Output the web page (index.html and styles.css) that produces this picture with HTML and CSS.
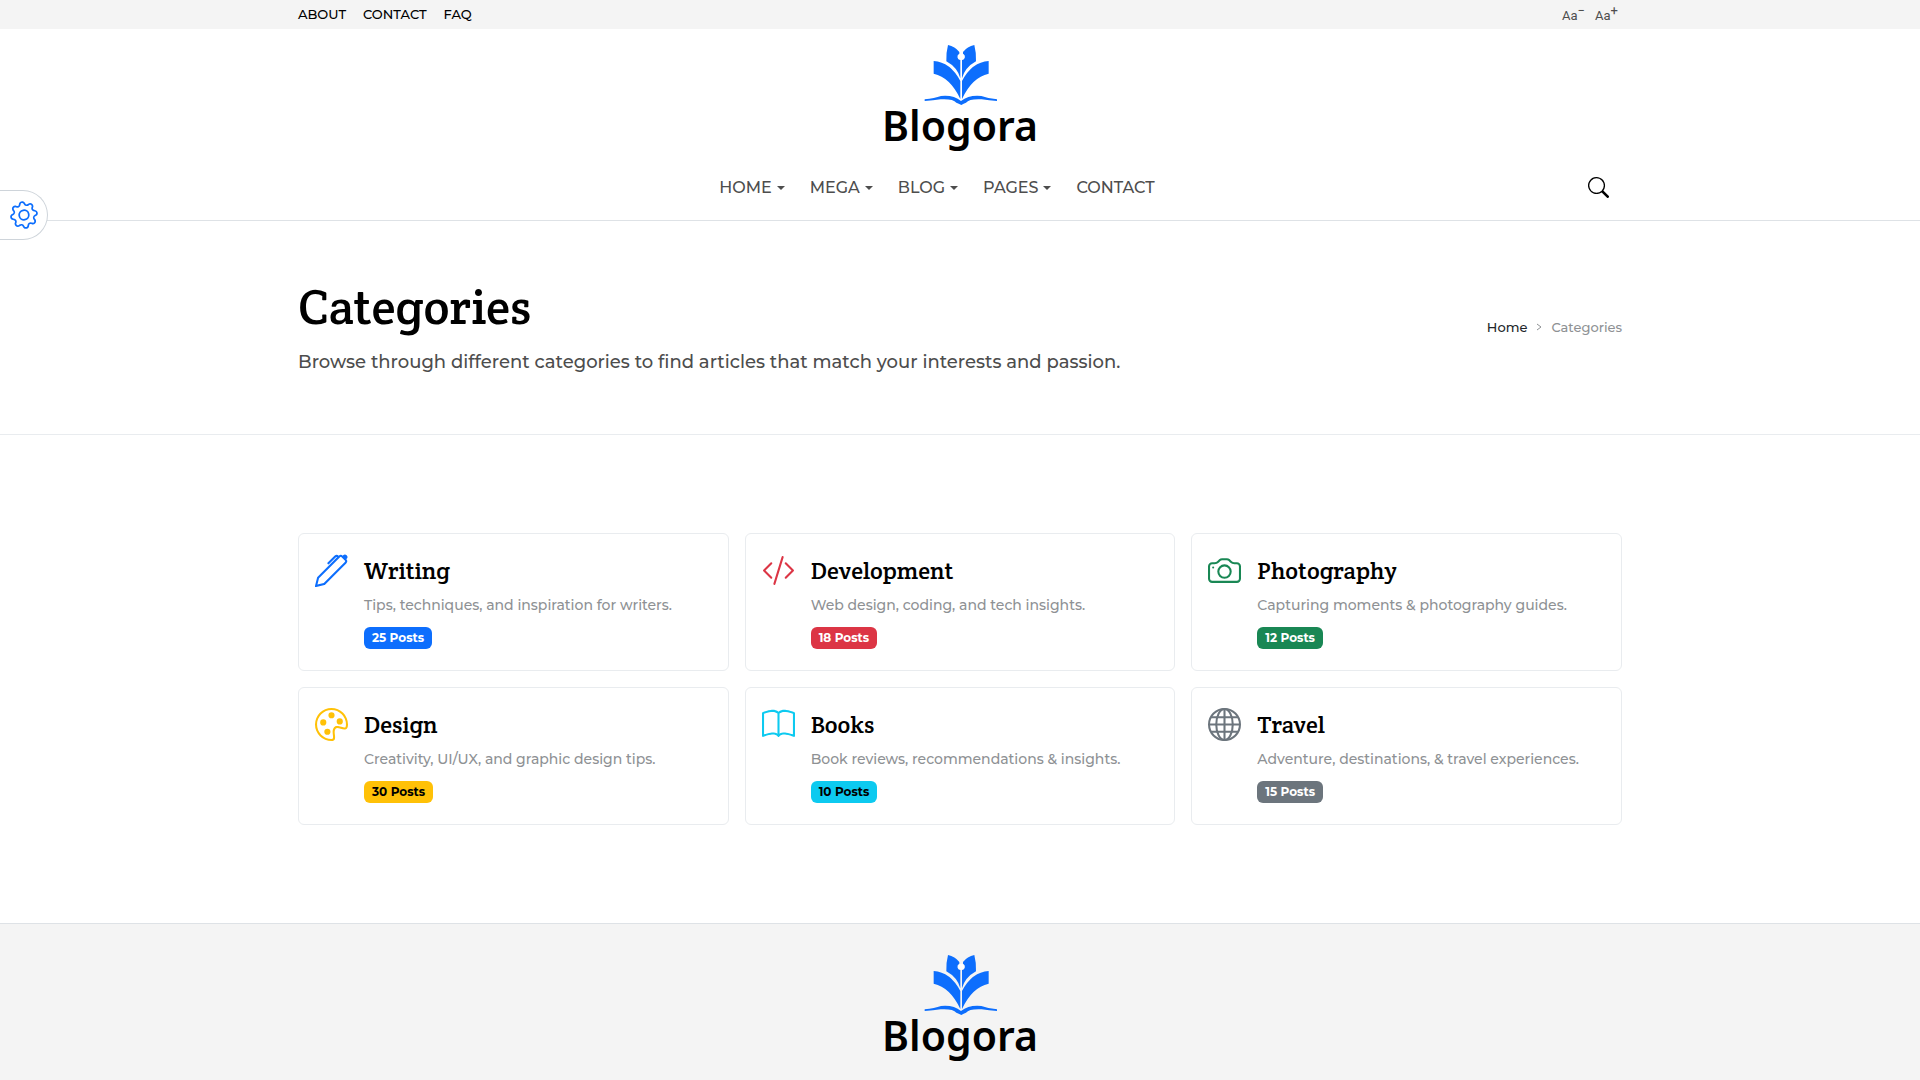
FILE: index.html
```html
<!DOCTYPE html>
<html lang="en">
<head>
    <meta charset="UTF-8">
    <meta name="viewport" content="width=device-width, initial-scale=1.0">
    <title>Blogora - Categories</title>
    <link rel="stylesheet" href="styles.css">
</head>
<body>
    <!-- Shared logo mark -->
    <svg class="sprite" aria-hidden="true">
        <symbol id="logo-mark" viewBox="193 45 219 180">
            <path d="M265 45Q286 49 299 66L299 71A10 10 0 0 0 302 90L302 145Q293 112 260 94Q259 68 265 45Z"/>
            <path d="M344 45Q323 49 310 66L310 71A10 10 0 0 1 307 90L307 145Q316 112 349 94Q350 68 344 45Z"/>
            <circle cx="304.500" cy="80" r="9" class="logo-dot"/>
            <path d="M222 93Q272 96 302 153L302 207Q272 142 222 131Z"/>
            <path d="M387 93Q337 96 307 153L307 207Q337 142 387 131Z"/>
            <path d="M195 208Q225 205 244 198Q281 194 304 213Q328 194 365 198Q384 205 412 208L412 213Q388 212 366 208Q329 206 319 218Q312 220 305 225Q297 220 290 218Q280 206 243 208Q221 212 195 213Z"/>
        </symbol>
    </svg>

    <!-- Top Bar -->
    <div class="top-bar">
        <div class="container top-bar-inner">
            <nav class="top-links" aria-label="Secondary">
                <a href="#">ABOUT</a>
                <a href="#">CONTACT</a>
                <a href="#">FAQ</a>
            </nav>
            <div class="font-size-btns">
                <button type="button" aria-label="Decrease text size">Aa<sup>−</sup></button>
                <button type="button" aria-label="Increase text size">Aa<sup>+</sup></button>
            </div>
        </div>
    </div>

    <!-- Header -->
    <header class="site-header">
        <div class="container">
            <a href="#" class="logo">
                <svg class="logo-mark" aria-hidden="true"><use href="#logo-mark"/></svg>
                <span class="logo-text">Blogora</span>
            </a>
            <div class="nav-row">
                <nav class="main-nav" aria-label="Main">
                    <a href="#" class="dropdown">HOME</a>
                    <a href="#" class="dropdown">MEGA</a>
                    <a href="#" class="dropdown">BLOG</a>
                    <a href="#" class="dropdown">PAGES</a>
                    <a href="#">CONTACT</a>
                </nav>
                <button type="button" class="search-btn" aria-label="Search">
                    <svg viewBox="0 0 16 16"><path d="M11.742 10.344a6.5 6.5 0 1 0-1.397 1.398h-.001q.044.06.098.115l3.85 3.85a1 1 0 0 0 1.415-1.414l-3.85-3.85a1 1 0 0 0-.115-.1zM12 6.500a5.500 5.500 0 1 1-11 0 5.500 5.500 0 0 1 11 0"/></svg>
                </button>
            </div>
        </div>
    </header>

    <button type="button" class="settings-btn" aria-label="Theme settings">
        <svg viewBox="0 0 16 16">
            <g transform="rotate(-10 8 8)">
                <path d="M8 4.754a3.246 3.246 0 1 0 0 6.492 3.246 3.246 0 0 0 0-6.492M5.754 8a2.246 2.246 0 1 1 4.492 0 2.246 2.246 0 0 1-4.492 0"/>
                <path d="M9.796 1.343c-.527-1.79-3.065-1.79-3.592 0l-.094.319a.873.873 0 0 1-1.255.52l-.292-.16c-1.64-.892-3.433.902-2.54 2.541l.159.292a.873.873 0 0 1-.52 1.255l-.319.094c-1.79.527-1.79 3.065 0 3.592l.319.094a.873.873 0 0 1 .52 1.255l-.16.292c-.892 1.64.901 3.434 2.541 2.54l.292-.159a.873.873 0 0 1 1.255.52l.094.319c.527 1.79 3.065 1.79 3.592 0l.094-.319a.873.873 0 0 1 1.255-.52l.292.16c1.64.893 3.434-.902 2.54-2.541l-.159-.292a.873.873 0 0 1 .52-1.255l.319-.094c1.79-.527 1.79-3.065 0-3.592l-.319-.094a.873.873 0 0 1-.52-1.255l.16-.292c.893-1.64-.902-3.433-2.541-2.54l-.292.159a.873.873 0 0 1-1.255-.52zm-2.633.283c.246-.835 1.428-.835 1.674 0l.094.319a1.873 1.873 0 0 0 2.693 1.115l.291-.16c.764-.415 1.6.42 1.184 1.185l-.159.292a1.873 1.873 0 0 0 1.116 2.692l.318.094c.835.246.835 1.428 0 1.674l-.319.094a1.873 1.873 0 0 0-1.115 2.693l.16.291c.415.764-.42 1.6-1.185 1.184l-.291-.159a1.873 1.873 0 0 0-2.693 1.116l-.094.318c-.246.835-1.428.835-1.674 0l-.094-.319a1.873 1.873 0 0 0-2.692-1.115l-.292.16c-.764.415-1.6-.42-1.184-1.185l.159-.291A1.873 1.873 0 0 0 1.945 8.930l-.319-.094c-.835-.246-.835-1.428 0-1.674l.319-.094A1.873 1.873 0 0 0 3.060 4.377l-.16-.292c-.415-.764.42-1.6 1.185-1.184l.292.159a1.873 1.873 0 0 0 2.692-1.115z"/>
            </g>
        </svg>
    </button>

    <main>
        <!-- Page Title -->
        <section class="page-title">
            <div class="container page-title-inner">
                <div>
                    <h1>Categories</h1>
                    <p>Browse through different categories to find articles that match your interests and passion.</p>
                </div>
                <nav class="breadcrumb" aria-label="Breadcrumb">
                    <a href="#">Home</a>
                    <svg viewBox="0 0 8 8" aria-hidden="true"><path d="M2 1L6 4L2 7"/></svg>
                    <span>Categories</span>
                </nav>
            </div>
        </section>

        <!-- Category Cards -->
        <section class="container category-grid">
            <a href="#" class="card blue">
                <svg viewBox="0 0 16 16"><path d="m13.498.795.149-.149a1.207 1.207 0 1 1 1.707 1.708l-.149.148a1.500 1.500 0 0 1-.059 2.059L4.854 14.854a.5.5 0 0 1-.233.131l-4 1a.5.5 0 0 1-.606-.606l1-4a.5.5 0 0 1 .131-.232l9.642-9.642a.5.5 0 0 0-.642.056L6.854 4.854a.5.5 0 1 1-.708-.708L9.440.854A1.500 1.500 0 0 1 11.500.796a1.500 1.500 0 0 1 1.998-.001m-.644.766a.5.5 0 0 0-.707 0L1.950 11.756l-.764 3.057 3.057-.764L14.440 3.854a.5.5 0 0 0 0-.708z"/></svg>
                <div>
                    <h2>Writing</h2>
                    <p>Tips, techniques, and inspiration for writers.</p>
                    <span class="badge">25 Posts</span>
                </div>
            </a>
            <a href="#" class="card red">
                <svg viewBox="0 0 16 16"><path d="M10.478 1.647a.5.5 0 1 0-.956-.294l-4 13a.5.5 0 0 0 .956.294zM4.854 4.146a.5.5 0 0 1 0 .708L1.707 8l3.147 3.146a.5.5 0 0 1-.708.708l-3.500-3.500a.5.5 0 0 1 0-.708l3.500-3.500a.5.5 0 0 1 .708 0m6.292 0a.5.5 0 0 0 0 .708L14.293 8l-3.147 3.146a.5.5 0 0 0 .708.708l3.500-3.500a.5.5 0 0 0 0-.708l-3.500-3.500a.5.5 0 0 0-.708 0"/></svg>
                <div>
                    <h2>Development</h2>
                    <p>Web design, coding, and tech insights.</p>
                    <span class="badge">18 Posts</span>
                </div>
            </a>
            <a href="#" class="card green">
                <svg viewBox="0 0 16 16">
                    <path d="M15 12a1 1 0 0 1-1 1H2a1 1 0 0 1-1-1V6a1 1 0 0 1 1-1h1.172a3 3 0 0 0 2.120-.879l.83-.828A1 1 0 0 1 6.827 3h2.344a1 1 0 0 1 .707.293l.828.828A3 3 0 0 0 12.828 5H14a1 1 0 0 1 1 1zM2 4a2 2 0 0 0-2 2v6a2 2 0 0 0 2 2h12a2 2 0 0 0 2-2V6a2 2 0 0 0-2-2h-1.172a2 2 0 0 1-1.414-.586l-.828-.828A2 2 0 0 0 9.172 2H6.828a2 2 0 0 0-1.414.586l-.828.828A2 2 0 0 1 3.172 4z"/>
                    <path d="M8 11a2.500 2.500 0 1 1 0-5 2.500 2.500 0 0 1 0 5m0 1a3.500 3.500 0 1 0 0-7 3.500 3.500 0 0 0 0 7M3 6.500a.5.5 0 1 1-1 0 .5.5 0 0 1 1 0"/>
                </svg>
                <div>
                    <h2>Photography</h2>
                    <p>Capturing moments &amp; photography guides.</p>
                    <span class="badge">12 Posts</span>
                </div>
            </a>
            <a href="#" class="card yellow">
                <svg viewBox="0 0 16 16">
                    <path d="M8 5a1.500 1.500 0 1 0 0-3 1.500 1.500 0 0 0 0 3m4 3a1.500 1.500 0 1 0 0-3 1.500 1.500 0 0 0 0 3M5.500 7a1.500 1.500 0 1 1-3 0 1.500 1.500 0 0 1 3 0m.5 6a1.500 1.500 0 1 0 0-3 1.500 1.500 0 0 0 0 3"/>
                    <path d="M16 8c0 3.150-1.866 2.585-3.567 2.070C11.420 9.763 10.465 9.473 10 10c-.603.683-.475 1.819-.351 2.920C9.826 14.495 9.996 16 8 16a8 8 0 1 1 8-8m-8 7c.611 0 .654-.171.655-.176.078-.146.124-.464.07-1.119-.014-.168-.037-.37-.061-.591-.052-.464-.112-1.005-.118-1.462-.01-.707.083-1.610.704-2.314.369-.417.845-.578 1.272-.618.404-.038.812.026 1.160.104.343.077.702.186 1.025.284l.028.008c.346.105.658.199.953.266.653.148.904.083.991.024C14.717 9.380 15 9.161 15 8a7 7 0 1 0-7 7"/>
                </svg>
                <div>
                    <h2>Design</h2>
                    <p>Creativity, UI/UX, and graphic design tips.</p>
                    <span class="badge">30 Posts</span>
                </div>
            </a>
            <a href="#" class="card cyan">
                <svg viewBox="0 0 16 16"><path d="M1 2.828c.885-.37 2.154-.769 3.388-.893 1.330-.134 2.458.063 3.112.752v9.746c-.935-.53-2.120-.603-3.213-.493-1.180.12-2.370.461-3.287.811zm7.500-.141c.654-.689 1.782-.886 3.112-.752 1.234.124 2.503.523 3.388.893v9.923c-.918-.35-2.107-.692-3.287-.81-1.094-.111-2.278-.039-3.213.492zM8 1.783C7.015.936 5.587.81 4.287.94c-1.514.153-3.042.672-3.994 1.105A.5.5 0 0 0 0 2.500v11a.5.5 0 0 0 .707.455c.882-.4 2.303-.881 3.680-1.020 1.409-.142 2.590.087 3.223.877a.5.5 0 0 0 .78 0c.633-.79 1.814-1.019 3.222-.877 1.378.139 2.800.62 3.681 1.020A.5.5 0 0 0 16 13.500v-11a.5.5 0 0 0-.293-.455c-.952-.433-2.480-.952-3.994-1.105C10.413.809 8.985.936 8 1.783"/></svg>
                <div>
                    <h2>Books</h2>
                    <p>Book reviews, recommendations &amp; insights.</p>
                    <span class="badge">10 Posts</span>
                </div>
            </a>
            <a href="#" class="card gray">
                <svg viewBox="0 0 16 16" class="globe">
                    <circle cx="8" cy="8" r="7.500"/>
                    <ellipse cx="8" cy="8" rx="4" ry="7.500"/>
                    <path d="M8 .5V15.500M.5 8H15.500M1.500 4.500H14.500M1.500 11.500H14.500"/>
                </svg>
                <div>
                    <h2>Travel</h2>
                    <p>Adventure, destinations, &amp; travel experiences.</p>
                    <span class="badge">15 Posts</span>
                </div>
            </a>
        </section>
    </main>

    <footer class="site-footer">
        <a href="#" class="logo">
            <svg class="logo-mark" aria-hidden="true"><use href="#logo-mark"/></svg>
            <span class="logo-text">Blogora</span>
        </a>
    </footer>
</body>
</html>
```
FILE: styles.css
```css
* {
    box-sizing: border-box;
}
body {
    margin: 0;
    font-family: Montserrat, Inter, sans-serif;
    font-size: 16px;
    color: #4d4d4d;
    background-color: #fff;
    overflow-x: hidden;
}
a {
    color: inherit;
    text-decoration: none;
}
button {
    padding: 0;
    border: none;
    background: none;
    font-family: inherit;
    color: inherit;
    cursor: pointer;
}
svg {
    display: block;
    fill: currentColor;
}
h1, h2, p {
    margin: 0;
}
h1, h2 {
    font-family: "Crete Round", "DejaVu Serif Condensed", "DejaVu Serif", serif;
    font-weight: 400;
    color: #000;
}
.sprite {
    position: absolute;
    width: 0;
    height: 0;
}
.container {
    width: 100%;
    max-width: 1348px;
    margin: 0 auto;
    padding: 0 12px;
}

/* Top bar */
.top-bar {
    background-color: #f4f4f4;
}
.top-bar-inner {
    display: flex;
    justify-content: space-between;
    align-items: center;
    height: 29px;
}
.top-links {
    display: flex;
    gap: 17px;
    padding-bottom: 2px;
    font-size: 13px;
    font-weight: 500;
    color: #000;
}
.font-size-btns {
    display: flex;
    gap: 10px;
    padding-top: 2px;
    padding-right: 4px;
}
.font-size-btns button {
    font-family: Roboto, sans-serif;
    font-size: 13px;
    line-height: 20px;
}
.font-size-btns sup {
    font-size: 13px;
    line-height: 0;
}

/* Header */
.site-header {
    padding: 16px 0 8px;
    border-bottom: 1px solid #dee2e6;
}
.logo {
    display: flex;
    flex-direction: column;
    align-items: center;
    width: 160px;
    margin: 0 auto;
    color: #000;
}
.logo-mark {
    width: 73px;
    height: 60px;
    fill: #0d6efd;
}
.logo-dot {
    fill: #fff;
}
.logo-text {
    font-family: "Noto Sans", sans-serif;
    font-size: 41px;
    font-weight: 600;
    line-height: 40px;
}
.nav-row {
    display: grid;
    grid-template-columns: 1fr auto 1fr;
    align-items: center;
    height: 50px;
    margin-top: 17px;
}
.main-nav {
    grid-column: 2;
    display: flex;
    gap: 25px;
    margin-right: 46px;
    font-weight: 500;
}
.dropdown::after {
    content: "";
    display: inline-block;
    margin-left: 5px;
    vertical-align: 3px;
    border-top: 4px solid;
    border-left: 4px solid transparent;
    border-right: 4px solid transparent;
}
.search-btn {
    justify-self: end;
    margin-right: 13px;
    color: #000;
}
.search-btn svg {
    width: 21px;
    height: 21px;
}

/* Settings tab */
.settings-btn {
    position: absolute;
    top: 190px;
    left: 0;
    padding: 10px 9px 10px 10px;
    border: 1px solid #ced4da;
    border-left: none;
    border-radius: 0 25px 25px 0;
    background-color: #fff;
    color: #0d6efd;
}
.settings-btn svg {
    width: 28px;
    height: 28px;
}

/* Page title */
.page-title {
    padding: 60px 0 58px;
    border-bottom: 1px solid #e9ecef;
}
.page-title-inner {
    display: flex;
    justify-content: space-between;
    align-items: center;
}
h1 {
    font-size: 49px;
    line-height: 52px;
    margin-bottom: 15px;
}
.page-title p {
    font-size: 18px;
    font-weight: 500;
    line-height: 28px;
}
.breadcrumb {
    display: flex;
    align-items: center;
    gap: 8px;
    padding-bottom: 4px;
    font-size: 13px;
    font-weight: 500;
    color: #8e9194;
}
.breadcrumb a {
    color: #212529;
}
.breadcrumb svg {
    width: 8px;
    height: 8px;
    fill: none;
    stroke: currentColor;
}

/* Category cards */
.category-grid {
    display: grid;
    grid-template-columns: repeat(3, 1fr);
    gap: 16px;
    padding-top: 98px;
    padding-bottom: 98px;
}
.card {
    display: flex;
    gap: 16px;
    padding: 20px 16px 21px;
    border: 1px solid #e9ecef;
    border-radius: 6px;
}
.card svg {
    flex: none;
    width: 33px;
    height: 33px;
}
.card h2 {
    font-size: 24px;
    line-height: 34px;
}
.card p {
    margin-bottom: 5px;
    font-size: 14px;
    font-weight: 500;
    line-height: 34px;
    color: #8e9194;
}
.badge {
    display: block;
    width: fit-content;
    padding: 0 8px;
    border-radius: 6px;
    font-size: 12px;
    font-weight: 700;
    line-height: 22px;
    color: #fff;
}
.globe {
    fill: none;
    stroke: currentColor;
}
.blue {
    color: #0d6efd;
}
.blue .badge {
    background-color: #0d6efd;
}
.red {
    color: #dc3545;
}
.red .badge {
    background-color: #dc3545;
}
.green {
    color: #198754;
}
.green .badge {
    background-color: #198754;
}
.yellow {
    color: #ffc107;
}
.yellow .badge {
    background-color: #ffc107;
    color: #000;
}
.cyan {
    color: #0dcaf0;
}
.cyan .badge {
    background-color: #0dcaf0;
    color: #000;
}
.gray {
    color: #6c757d;
}
.gray .badge {
    background-color: #6c757d;
}

/* Footer */
.site-footer {
    padding: 31px 0 48px;
    border-top: 1px solid #dee2e6;
    background-color: #f4f4f4;
}
.site-footer .logo-dot {
    fill: #f4f4f4;
}
```
